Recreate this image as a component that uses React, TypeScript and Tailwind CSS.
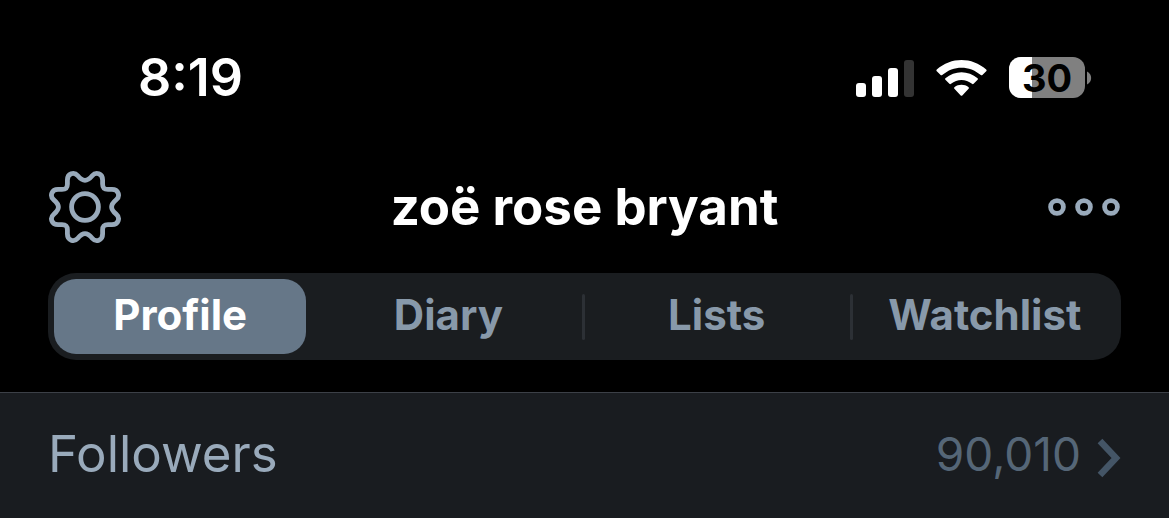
import { clsx } from "clsx";

const tabs = ["Profile", "Diary", "Lists", "Watchlist"];

const SignalIcon = () => (
  <svg width="58" height="38" viewBox="0 0 58 38" fill="#fff" aria-hidden="true">
    <rect x="0" y="24" width="10" height="14" rx="3" />
    <rect x="16" y="17" width="10" height="21" rx="3" />
    <rect x="32" y="9" width="10" height="29" rx="3" />
    <rect x="48" y="1" width="10" height="37" rx="3" fill="#333" />
  </svg>
);

const WifiIcon = () => (
  <svg width="51" height="38" viewBox="0 0 51 38" fill="#fff" aria-hidden="true">
    <path d="M0.8 10.6C15 -2.2 36 -2.2 50.2 10.6Q51 11.4 50.2 12.2L46.4 16Q45.6 16.7 44.8 16C33.5 6.2 17.5 6.2 6.2 16Q5.4 16.7 4.6 16L0.8 12.2Q0 11.4 0.8 10.6Z" />
    <path d="M9.4 19.2C18.6 11.2 32.4 11.2 41.6 19.2Q42.4 20 41.6 20.8L37.6 24.8Q36.8 25.5 36 24.8C29.8 19.6 21.2 19.6 15 24.8Q14.2 25.5 13.4 24.8L9.4 20.8Q8.6 20 9.4 19.2Z" />
    <path d="M18.4 28.2C22.6 25 28.4 25 32.6 28.2Q33.4 29 32.6 29.8L26.3 36.4Q25.5 37.2 24.7 36.4L18.4 29.8Q17.6 29 18.4 28.2Z" />
  </svg>
);

const Battery = ({ level }: { level: number }) => (
  <div className="flex items-center gap-0.5">
    <div className="relative flex h-[41px] w-[76px] items-center justify-center rounded-xl bg-[#808080]">
      <div className="absolute inset-y-0 left-0 rounded-l-xl bg-white" style={{ width: `${level}%` }} />
      <span className="relative text-[38px] leading-none font-bold text-black">{level}</span>
    </div>
    <svg width="5" height="14" viewBox="0 0 5 14" fill="#808080" aria-hidden="true">
      <path d="M0 0.5C5.5 3 5.5 11 0 13.5Z" />
    </svg>
  </div>
);

const GearIcon = () => (
  <svg width="74" height="74" viewBox="-1 -1 74 74" fill="none" stroke="#9ab" strokeWidth="4.8" aria-hidden="true">
    <path d="M18.4 13V9C18.4 2.6 25 0.4 28.8 4.8C31.5 8 33 9.4 36 9.4S40.5 8 43.2 4.8C47 0.4 53.6 2.6 53.6 9V13C53.6 16.8 55.2 18.4 59 18.4H63C69.4 18.4 71.6 25 67.2 28.8C64 31.5 62.6 33 62.6 36S64 40.5 67.2 43.2C71.6 47 69.4 53.6 63 53.6H59C55.2 53.6 53.6 55.2 53.6 59V63C53.6 69.4 47 71.6 43.2 67.2C40.5 64 39 62.6 36 62.6S31.5 64 28.8 67.2C25 71.6 18.4 69.4 18.4 63V59C18.4 55.2 16.8 53.6 13 53.6H9C2.6 53.6 0.4 47 4.8 43.2C8 40.5 9.4 39 9.4 36S8 31.5 4.8 28.8C0.4 25 2.6 18.4 9 18.4H13C16.8 18.4 18.4 16.8 18.4 13Z" />
    <circle cx="36" cy="36" r="13.4" />
  </svg>
);

const MoreIcon = () => (
  <svg width="74" height="20" viewBox="0 0 74 20" fill="none" stroke="#9ab" strokeWidth="4.8" aria-hidden="true">
    <circle cx="10" cy="10" r="6.4" />
    <circle cx="37" cy="10" r="6.4" />
    <circle cx="64" cy="10" r="6.4" />
  </svg>
);

const StatusBar = () => (
  <div className="flex h-[155px] items-center justify-between pr-[77px] pl-[138px]">
    <span className="text-[52px] leading-none font-semibold">8:19</span>
    <div className="flex items-center gap-[22px]">
      <SignalIcon />
      <WifiIcon />
      <Battery level={30} />
    </div>
  </div>
);

const Header = () => (
  <header className="grid grid-cols-[1fr_auto_1fr] items-center px-12 pt-3.5">
    <button type="button" aria-label="Settings" className="justify-self-start">
      <GearIcon />
    </button>
    <h1 className="text-[51px] leading-[76px] font-bold">zoë rose bryant</h1>
    <button type="button" aria-label="More" className="justify-self-end">
      <MoreIcon />
    </button>
  </header>
);

const Tabs = () => (
  <nav className="mx-12 mt-7 mb-8 grid grid-cols-4 rounded-[28px] bg-[#1a1d20]">
    {tabs.map((tab, i) => (
      <div key={tab} className="flex items-center py-1.5 pl-1.5">
        <button
          type="button"
          className={clsx(
            "h-[75px] flex-1 rounded-[22px] pb-1 text-[42px] leading-none font-bold",
            i === 0 ? "bg-[#678] text-white" : "text-[#89a]",
          )}
        >
          {tab}
        </button>
        <div className="flex w-2.5 justify-end">
          {(i === 1 || i === 2) && <span className="h-[46px] w-[3px] rounded-full bg-[#2c3035]" />}
        </div>
      </div>
    ))}
  </nav>
);

export default function App() {
  return (
    <div className="min-h-screen bg-black font-['Inter',sans-serif] text-white">
      <StatusBar />
      <Header />
      <Tabs />
      <a
        href="#followers"
        className="flex h-[126px] items-center justify-between border-t border-[#3c4047] bg-[#191c20] px-12 pt-1"
      >
        <span className="pb-2 text-[51px] leading-none text-[#9ab]">Followers</span>
        <span className="flex items-center gap-4 text-[#567]">
          <span className="pb-2 text-[46px] leading-none">90,010</span>
          <svg width="24" height="40" viewBox="0 0 24 40" fill="none" stroke="#456" strokeWidth="6.5" aria-hidden="true">
            <path d="M3 3L19 20L3 37" />
          </svg>
        </span>
      </a>
    </div>
  );
}
